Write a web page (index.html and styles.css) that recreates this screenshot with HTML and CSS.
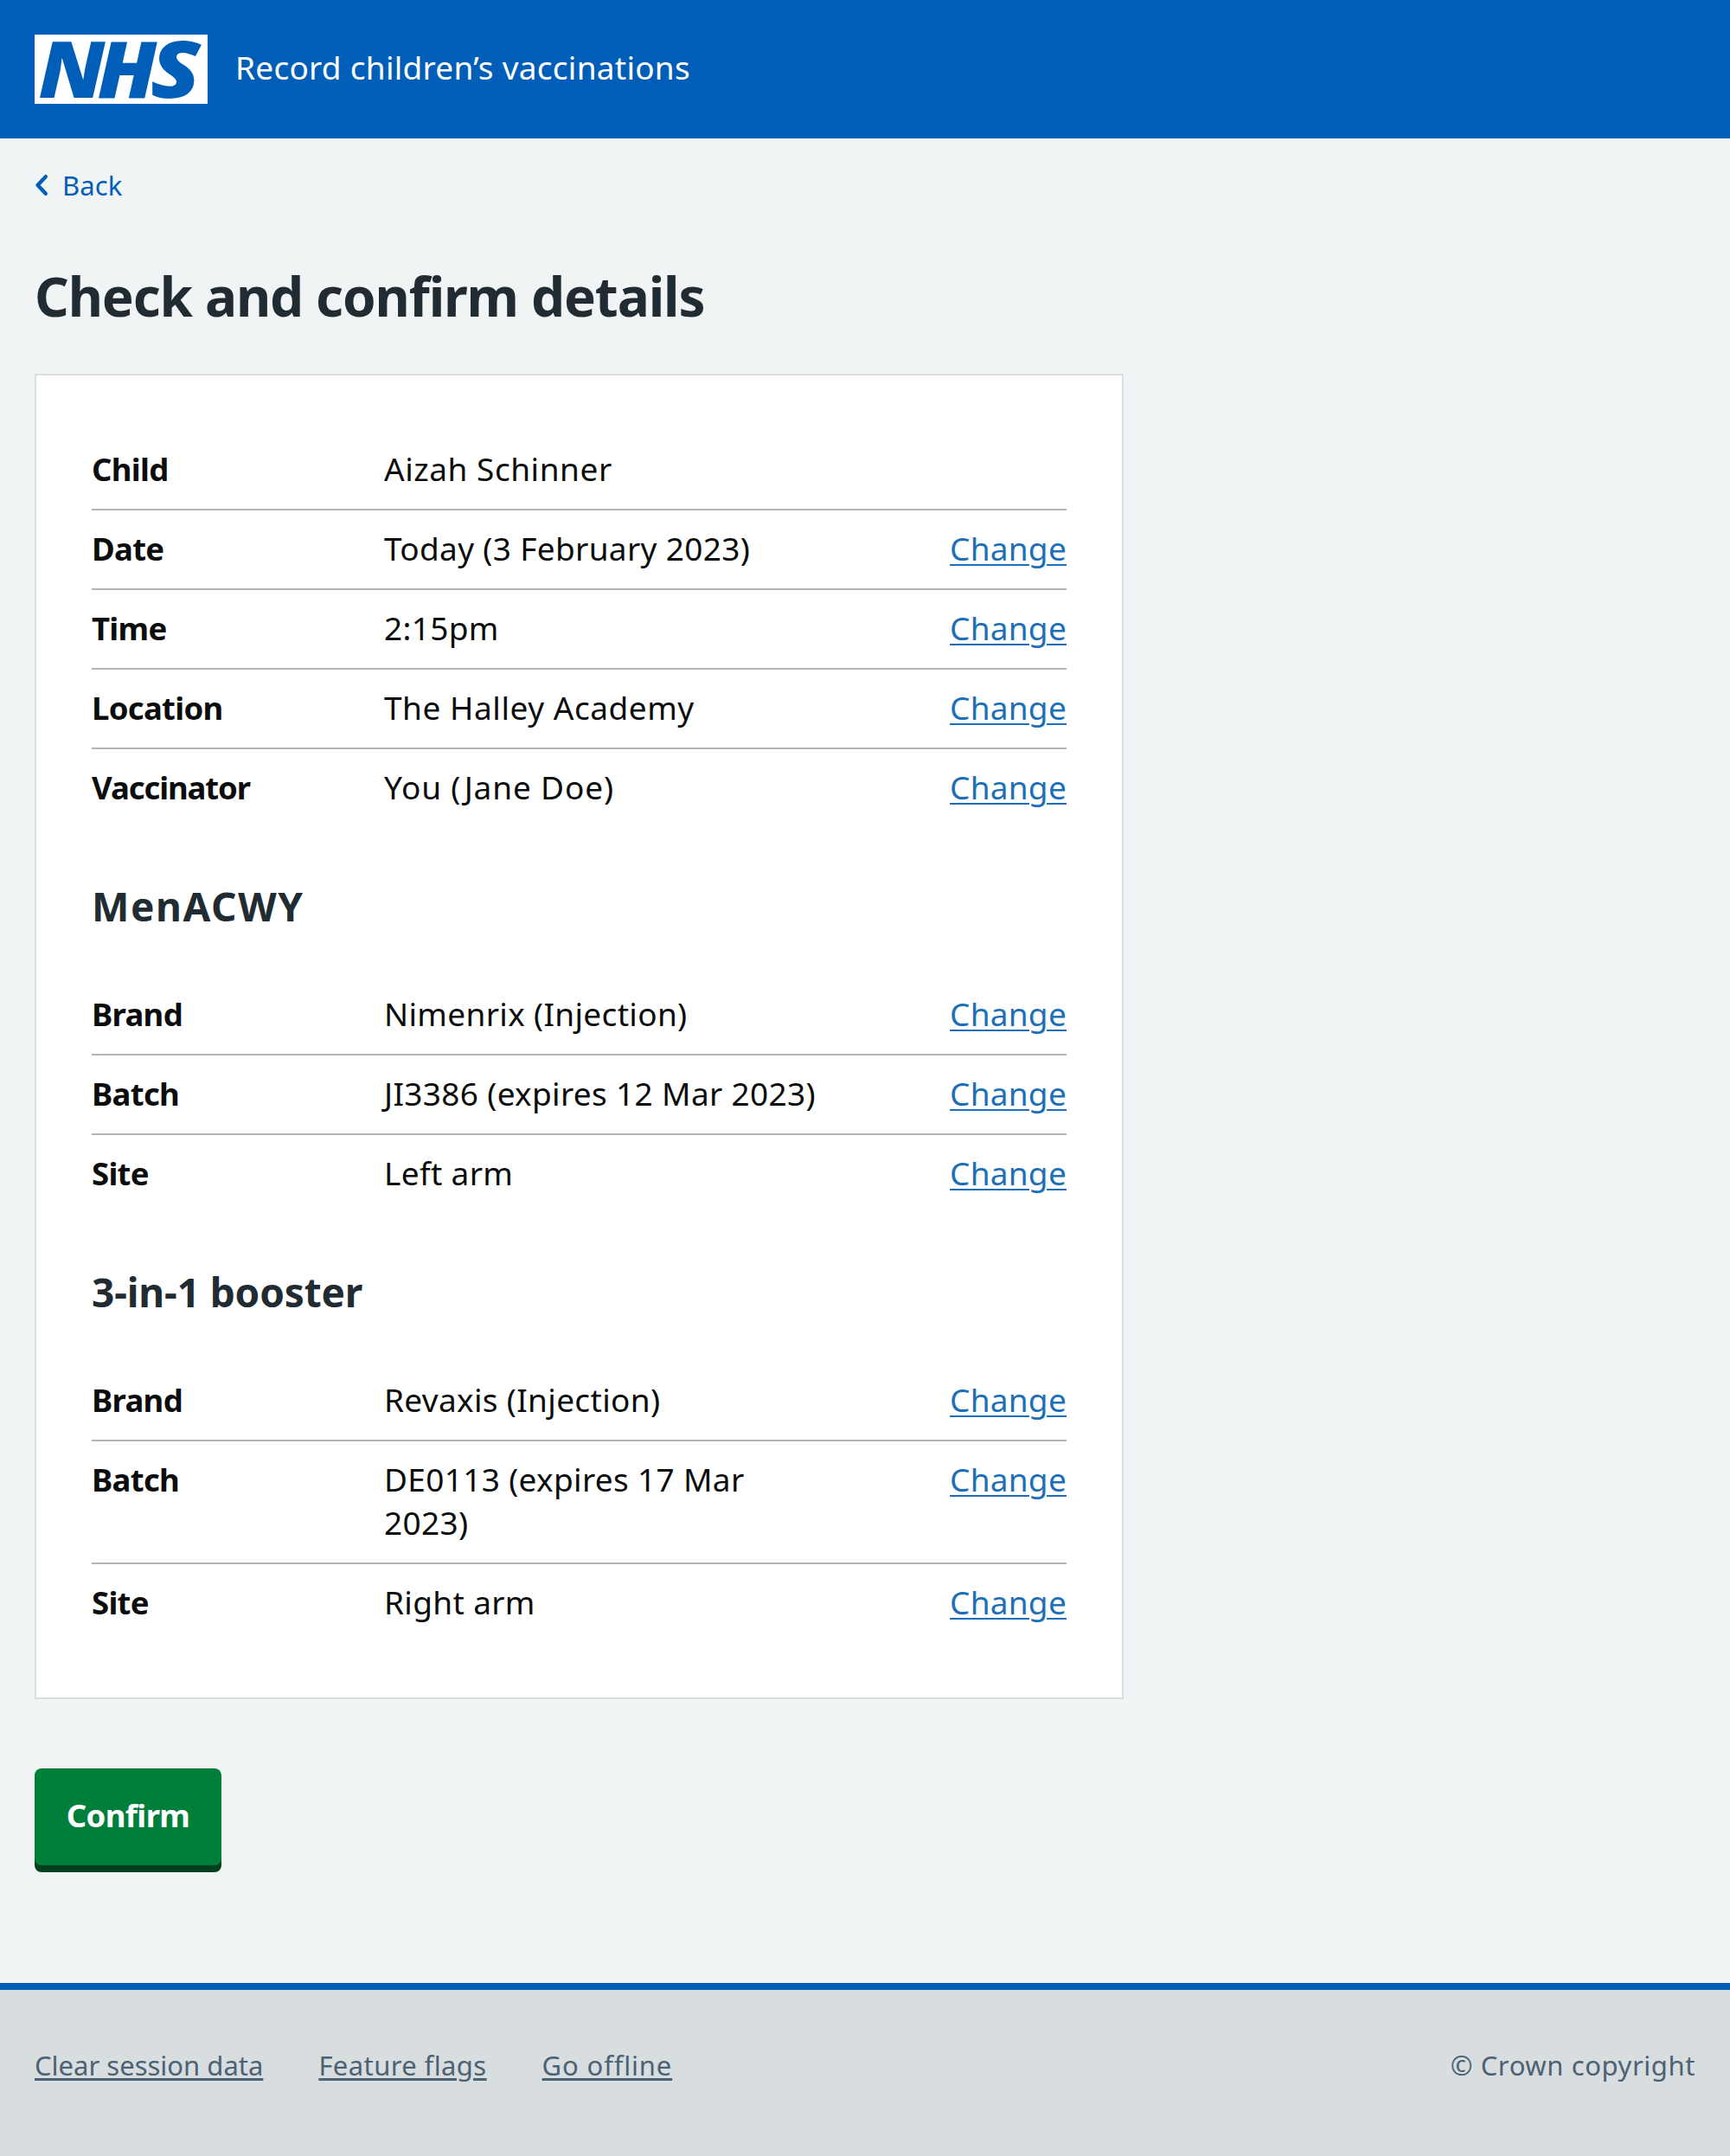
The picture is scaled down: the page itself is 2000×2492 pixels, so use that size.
FILE: index.html
```html
<!DOCTYPE html>
<html lang="en">
<head>
<meta charset="utf-8">
<title>Check and confirm details – Record children’s vaccinations</title>
<link rel="stylesheet" href="styles.css">
</head>
<body>
<header class="header">
  <svg class="header__logo" viewBox="0 0 200 80" width="200" height="80" role="img" aria-label="NHS">
    <rect width="200" height="80" fill="#fff"/>
    <g class="header__logo-text">
      <text transform="translate(4.6 72.5) scale(1.07 1)">N</text>
      <text transform="translate(72.4 72.5) scale(1.06 1)">H</text>
      <text transform="translate(134 72.5) scale(1.16 1)">S</text>
    </g>
  </svg>
  <span class="header__service">Record children’s vaccinations</span>
</header>

<main class="main">
  <a class="back" href="#">
    <svg class="back__icon" viewBox="0 0 16 26" width="16" height="26" aria-hidden="true">
      <path d="M12.8 3.2 3.6 13l9.2 9.8" fill="none" stroke="#005eb8" stroke-width="4.4" stroke-linecap="round" stroke-linejoin="round"/>
    </svg>
    <span>Back</span>
  </a>
  <h1 class="title">Check and confirm details</h1>

  <section class="card">
    <dl class="summary">
      <div class="row"><dt class="row__key">Child</dt><dd class="row__value row__value--loose">Aizah Schinner</dd></div>
      <div class="row"><dt class="row__key">Date</dt><dd class="row__value">Today (3 February 2023)</dd><dd class="row__action"><a class="link" href="#">Change</a></dd></div>
      <div class="row"><dt class="row__key">Time</dt><dd class="row__value">2:15pm</dd><dd class="row__action"><a class="link" href="#">Change</a></dd></div>
      <div class="row"><dt class="row__key">Location</dt><dd class="row__value row__value--loose">The Halley Academy</dd><dd class="row__action"><a class="link" href="#">Change</a></dd></div>
      <div class="row"><dt class="row__key row__key--tight">Vaccinator</dt><dd class="row__value row__value--looser">You (Jane Doe)</dd><dd class="row__action"><a class="link" href="#">Change</a></dd></div>
    </dl>

    <h2 class="subtitle subtitle--caps">MenACWY</h2>
    <dl class="summary">
      <div class="row"><dt class="row__key">Brand</dt><dd class="row__value">Nimenrix (Injection)</dd><dd class="row__action"><a class="link" href="#">Change</a></dd></div>
      <div class="row"><dt class="row__key">Batch</dt><dd class="row__value">JI3386 (expires 12 Mar 2023)</dd><dd class="row__action"><a class="link" href="#">Change</a></dd></div>
      <div class="row"><dt class="row__key">Site</dt><dd class="row__value">Left arm</dd><dd class="row__action"><a class="link" href="#">Change</a></dd></div>
    </dl>

    <h2 class="subtitle">3-in-1 booster</h2>
    <dl class="summary">
      <div class="row"><dt class="row__key">Brand</dt><dd class="row__value">Revaxis (Injection)</dd><dd class="row__action"><a class="link" href="#">Change</a></dd></div>
      <div class="row"><dt class="row__key">Batch</dt><dd class="row__value">DE0113 (expires 17 Mar 2023)</dd><dd class="row__action"><a class="link" href="#">Change</a></dd></div>
      <div class="row"><dt class="row__key">Site</dt><dd class="row__value">Right arm</dd><dd class="row__action"><a class="link" href="#">Change</a></dd></div>
    </dl>
  </section>

  <button class="button" type="button">Confirm</button>
</main>

<footer class="footer">
  <nav class="footer__links">
    <a class="footer__link" href="#">Clear session data</a>
    <a class="footer__link footer__link--loose" href="#">Feature flags</a>
    <a class="footer__link footer__link--looser" href="#">Go offline</a>
  </nav>
  <span class="footer__copyright">© Crown copyright</span>
</footer>
</body>
</html>
```
FILE: styles.css
```css
* { box-sizing: border-box; }

body {
  margin: 0;
  min-height: 2492px;
  display: flex;
  flex-direction: column;
  background: #f0f4f5;
  color: #0b0c0c;
  font: 400 37px/50px "Noto Sans", "Open Sans", sans-serif;
  letter-spacing: 0.33px;
}

dl, dd, h1, h2 { margin: 0; }

.header {
  display: flex;
  align-items: center;
  gap: 32px;
  height: 160px;
  padding: 0 40px;
  background: #005eb8;
  color: #fff;
}
.header__logo { display: block; overflow: visible; }
.header__logo-text {
  font: italic 900 91px "Noto Sans", "Open Sans", sans-serif;
  letter-spacing: 0;
  fill: #005eb8;
}
.header__service { padding-bottom: 5px; letter-spacing: 0.26px; }

.main {
  display: flex;
  flex-direction: column;
  align-items: flex-start;
  padding: 32px 40px 0;
}

.back {
  display: flex;
  align-items: center;
  gap: 16px;
  height: 44px;
  color: #005eb8;
  font-size: 31px;
  line-height: 44px;
  letter-spacing: 0.1px;
  text-decoration: none;
}

.title {
  margin-top: 70px;
  color: #212b32;
  font-size: 62px;
  font-weight: 700;
  line-height: 72px;
  letter-spacing: -1.13px;
}

.card {
  width: 1259px;
  margin-top: 54px;
  padding: 64px 64px 62px;
  border: 2px solid #d8dde0;
  background: #fff;
}

.row {
  display: grid;
  grid-template-columns: 338px 506px 1fr;
  padding: 19px 0 21px;
  border-bottom: 2px solid #aeb4b8;
}
.row:last-child { border-bottom-color: transparent; }
.row__key { font-size: 36.5px; font-weight: 700; letter-spacing: -0.7px; }
.row__key--tight { letter-spacing: -1.1px; }
.row__value--loose { letter-spacing: 0.54px; }
.row__value--looser { letter-spacing: 0.85px; }
.row__action { text-align: right; }

.link {
  color: #1d70b8;
  letter-spacing: 0.25px;
  text-decoration: underline;
  text-decoration-thickness: 2px;
  text-underline-offset: 4px;
}

.subtitle {
  margin: 59px 0 51px;
  color: #212b32;
  font-size: 46px;
  font-weight: 700;
  line-height: 60px;
  letter-spacing: -0.15px;
}
.subtitle--caps { letter-spacing: 1.6px; }

.button {
  width: 216px;
  height: 112px;
  margin-top: 80px;
  padding: 0 0 4px;
  border: 0;
  border-radius: 8px;
  background: #007f3b;
  box-shadow: 0 8px 0 #00401e;
  color: #fff;
  font: inherit;
  font-size: 36.5px;
  font-weight: 700;
  letter-spacing: -0.6px;
}

.footer {
  display: flex;
  justify-content: space-between;
  height: 200px;
  margin-top: auto;
  padding: 64px 40px 0;
  border-top: 8px solid #005eb8;
  background: #d8dde0;
  color: #4c6272;
  font-size: 31px;
  line-height: 46px;
}
.footer__links { display: flex; gap: 64px; }
.footer__link {
  height: 46px;
  color: inherit;
  letter-spacing: 0;
  text-decoration: underline;
  text-decoration-thickness: 3px;
  text-underline-offset: 3px;
}
.footer__link--loose { letter-spacing: 0.4px; }
.footer__link--looser { letter-spacing: 0.85px; }
.footer__copyright { letter-spacing: 0.58px; }
```
